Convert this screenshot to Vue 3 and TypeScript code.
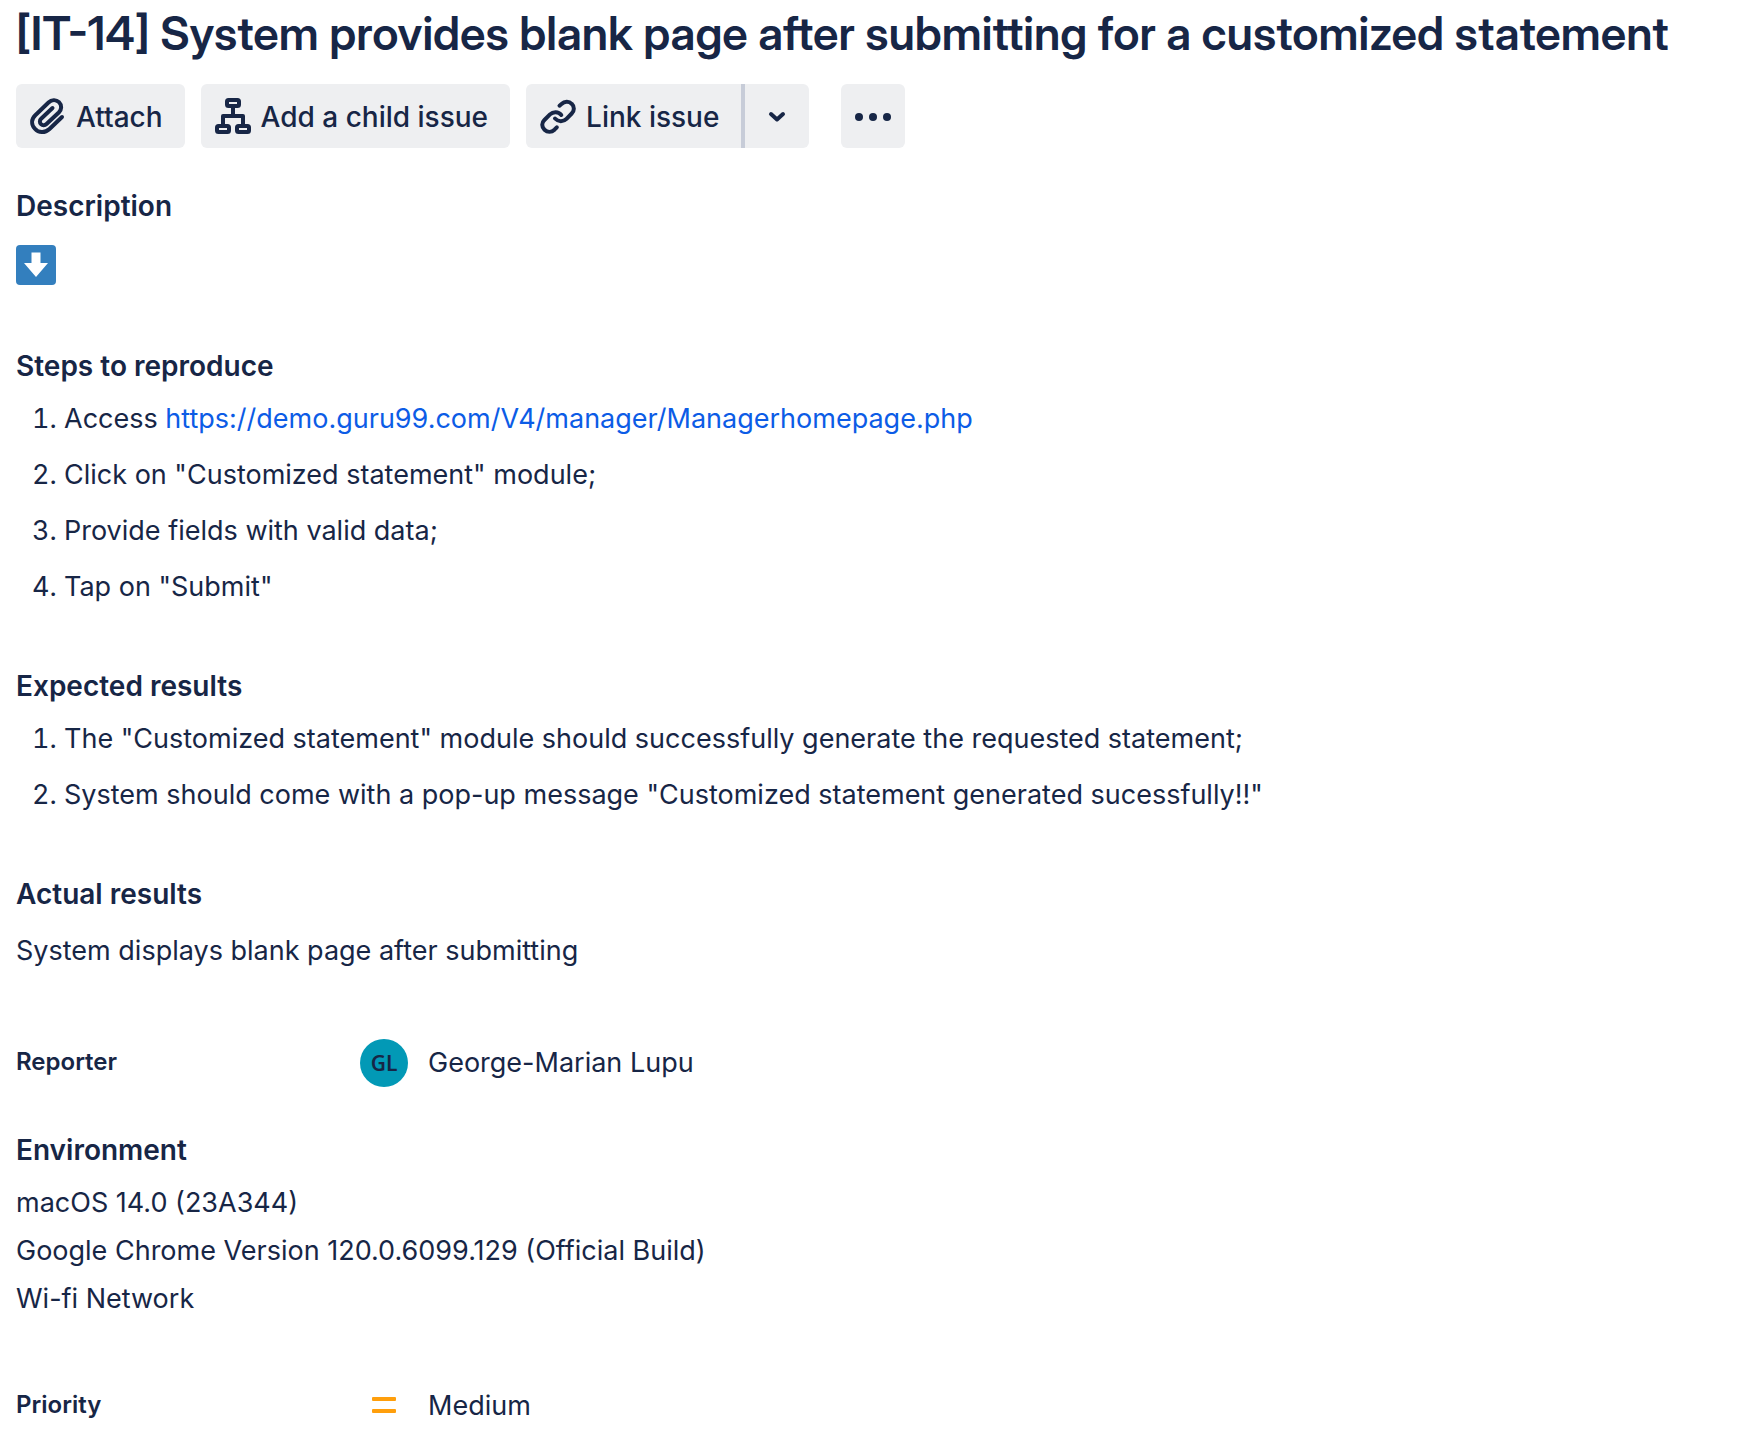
<script setup lang="ts">
interface Person {
  name: string
  initials: string
}

const issueKey = 'IT-14'
const summary = 'System provides blank page after submitting for a customized statement'
const managerUrl = 'https://demo.guru99.com/V4/manager/Managerhomepage.php'

const steps: string[] = [
  'Click on "Customized statement" module;',
  'Provide fields with valid data;',
  'Tap on "Submit"',
]

const expected: string[] = [
  'The "Customized statement" module should successfully generate the requested statement;',
  'System should come with a pop-up message "Customized statement generated sucessfully!!"',
]

const environment: string[] = [
  'macOS 14.0 (23A344)',
  'Google Chrome Version 120.0.6099.129 (Official Build)',
  'Wi-fi Network',
]

const reporter: Person = { name: 'George-Marian Lupu', initials: 'GL' }
</script>

<template>
  <main class="issue">
    <h1 class="title">[{{ issueKey }}] {{ summary }}</h1>

    <div class="toolbar">
      <button type="button" class="btn">
        <svg class="icon" viewBox="0 0 48 48" aria-hidden="true">
          <path d="M38 25 25.500 37C21 41.200 14.500 41 10.900 36.800C7 32.400 7.300 27 11.300 23.200L24.500 10.500C27.500 7.600 32 7.200 35 10.200C38 13.200 37.800 17.500 34.800 20.500L22.500 32C20.900 33.500 18.500 33.600 17 32.100C15.500 30.600 15.500 28.300 17.100 26.800L28.500 16" />
        </svg>
        <span>Attach</span>
      </button>

      <button type="button" class="btn">
        <svg class="icon" viewBox="0 0 48 48" aria-hidden="true">
          <rect x="18" y="8" width="12" height="6" rx="1.500" />
          <rect x="8" y="34" width="12" height="6" rx="1.500" />
          <rect x="28" y="34" width="12" height="6" rx="1.500" />
          <path class="square" d="M24 14v10M14 34V24h20v10" />
        </svg>
        <span>Add a child issue</span>
      </button>

      <div class="split">
        <button type="button" class="btn split-main">
          <svg class="icon" viewBox="0 0 48 48" aria-hidden="true">
            <path d="M25.500 13.700 27.500 12C30.500 9.200 35 9 37.700 11.800C40.600 14.600 40.500 18.700 37.700 21.500L32.500 26.800C29.300 30 24.300 30 21 26.500" />
            <path d="M22.800 35.300 20.500 37.700C17.500 40.500 13.400 40.500 10.500 37.700C7.500 34.900 7.500 30.800 10.400 28L16 22.400C19.300 19.300 24.300 19.400 27.300 23" />
          </svg>
          <span>Link issue</span>
        </button>
        <button type="button" class="btn square-btn split-toggle" aria-label="More link options">
          <svg class="icon" viewBox="0 0 48 48" aria-hidden="true">
            <path d="m18 22 6 5.500 6-5.500" />
          </svg>
        </button>
      </div>

      <button type="button" class="btn square-btn more" aria-label="More actions">
        <svg class="icon dots" viewBox="0 0 48 48" aria-hidden="true">
          <circle cx="10" cy="25" r="4" />
          <circle cx="24" cy="25" r="4" />
          <circle cx="38" cy="25" r="4" />
        </svg>
      </button>
    </div>

    <section class="description">
      <h2>Description</h2>
      <svg class="emoji" viewBox="0 0 40 40" role="img" aria-label="Down arrow">
        <rect width="40" height="40" rx="4" fill="#337fbe" />
        <path d="M15.500 7.500h9V18h7.500L20 32 8 18h7.500z" fill="#fff" />
      </svg>
    </section>

    <section class="block">
      <h2>Steps to reproduce</h2>
      <ol>
        <li>Access <a :href="managerUrl">{{ managerUrl }}</a></li>
        <li v-for="step in steps" :key="step">{{ step }}</li>
      </ol>
    </section>

    <section class="block">
      <h2>Expected results</h2>
      <ol>
        <li v-for="result in expected" :key="result">{{ result }}</li>
      </ol>
    </section>

    <section class="block actual">
      <h2>Actual results</h2>
      <p>System displays blank page after submitting</p>
    </section>

    <div class="field reporter">
      <h3>Reporter</h3>
      <div class="value">
        <span class="avatar">{{ reporter.initials }}</span>
        <span>{{ reporter.name }}</span>
      </div>
    </div>

    <section class="environment">
      <h2>Environment</h2>
      <p v-for="line in environment" :key="line">{{ line }}</p>
    </section>

    <div class="field priority">
      <h3>Priority</h3>
      <div class="value">
        <svg class="level" viewBox="0 0 48 48" aria-hidden="true">
          <rect x="12" y="15" width="24" height="4" rx="1" />
          <rect x="12" y="27" width="24" height="4" rx="1" />
        </svg>
        <span>Medium</span>
      </div>
    </div>
  </main>
</template>

<style>
body {
  margin: 0;
  background: #fff;
}
</style>

<style scoped>
.issue {
  padding: 3px 16px 8px;
  color: #172646;
  font-family: Inter, "Liberation Sans", sans-serif;
  font-size: 27px;
  line-height: 48px;
}

.title {
  margin: 0;
  font-family: "Inter Display", Inter, "Liberation Sans", sans-serif;
  font-size: 46px;
  font-weight: 600;
  line-height: 60px;
}

h2,
h3,
p,
ol {
  margin: 0;
}

h2 {
  font-size: 28px;
  font-weight: 600;
  line-height: 40px;
}

h3 {
  font-size: 24px;
  font-weight: 600;
  line-height: 46px;
}

.toolbar {
  display: flex;
  align-items: center;
  gap: 16px;
  margin-top: 21px;
}

.btn {
  display: flex;
  align-items: center;
  gap: 4px;
  height: 64px;
  padding: 0 22px 0 8px;
  border: 0;
  border-radius: 6px;
  background: #eeeff1;
  color: inherit;
  font: inherit;
  font-size: 28px;
  font-weight: 500;
  line-height: 48px;
  white-space: nowrap;
  cursor: pointer;
}

.btn span {
  padding-top: 2px;
}

.icon {
  flex: none;
  width: 48px;
  height: 48px;
  fill: none;
  stroke: #172646;
  stroke-width: 4;
  stroke-linecap: round;
  stroke-linejoin: round;
}

.square {
  stroke-linecap: butt;
}

.dots {
  fill: #172646;
  stroke: none;
}

.split {
  display: flex;
}

.split-main {
  border-radius: 6px 0 0 6px;
}

.split-toggle {
  border-left: 4px solid #c7ccd8;
  border-radius: 0 6px 6px 0;
}

.square-btn {
  justify-content: center;
  padding: 0 8px;
}

.more {
  margin-left: 16px;
}

.description {
  margin-top: 38px;
}

.emoji {
  display: block;
  width: 40px;
  height: 40px;
  margin: 19px 0 61px;
}

.block {
  margin-bottom: 55px;
}

ol {
  display: flex;
  flex-direction: column;
  gap: 8px;
  margin-top: 9px;
  padding-left: 48px;
}

a {
  color: #0c5ce6;
  text-decoration: none;
}

.actual p {
  margin-top: 13px;
}

.field {
  display: grid;
  grid-template-columns: 344px 1fr;
}

.reporter {
  margin-top: 64px;
}

.value {
  display: flex;
  align-items: center;
  gap: 20px;
}

.avatar {
  width: 48px;
  height: 48px;
  border-radius: 50%;
  background: #0299b6;
  font-family: "Noto Sans", sans-serif;
  font-size: 21px;
  font-weight: 600;
  text-align: center;
}

.environment {
  margin-top: 43px;
}

.environment h2 {
  margin-bottom: 9px;
}

.priority {
  margin-top: 59px;
}

.level {
  width: 48px;
  height: 48px;
  fill: #ff9f0c;
}
</style>
